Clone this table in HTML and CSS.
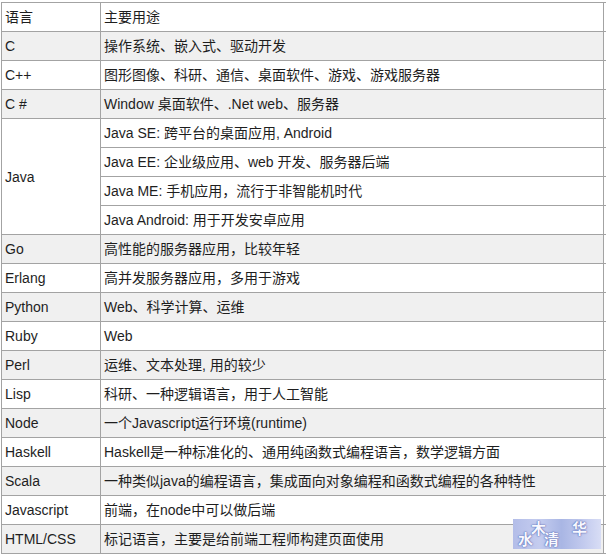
FILE: index.html
```html
<!DOCTYPE html>
<html lang="zh">
<head>
<meta charset="utf-8">
<title>语言用途</title>
<link rel="stylesheet" href="styles.css">
</head>
<body>
<div class="wrap">
<table class="langs">
  <colgroup><col class="k1"><col class="k2"><col class="k3"></colgroup>
  <tbody>
    <tr class="w"><td class="c1">语言</td><td class="c2">主要用途</td><td class="c3"></td></tr>
    <tr class="g"><td class="c1">C</td><td class="c2">操作系统、嵌入式、驱动开发</td><td class="c3"></td></tr>
    <tr class="w"><td class="c1">C++</td><td class="c2">图形图像、科研、通信、桌面软件、游戏、游戏服务器</td><td class="c3"></td></tr>
    <tr class="g"><td class="c1">C #</td><td class="c2">Window 桌面软件、.Net web、服务器</td><td class="c3"></td></tr>
    <tr class="w"><td class="c1" rowspan="4">Java</td><td class="c2">Java SE: 跨平台的桌面应用, Android</td><td class="c3"></td></tr>
    <tr class="w"><td class="c2">Java EE: 企业级应用、web 开发、服务器后端</td><td class="c3"></td></tr>
    <tr class="w"><td class="c2">Java ME: 手机应用，流行于非智能机时代</td><td class="c3"></td></tr>
    <tr class="w"><td class="c2">Java Android: 用于开发安卓应用</td><td class="c3"></td></tr>
    <tr class="g"><td class="c1">Go</td><td class="c2">高性能的服务器应用，比较年轻</td><td class="c3"></td></tr>
    <tr class="w"><td class="c1">Erlang</td><td class="c2">高并发服务器应用，多用于游戏</td><td class="c3"></td></tr>
    <tr class="g"><td class="c1">Python</td><td class="c2">Web、科学计算、运维</td><td class="c3"></td></tr>
    <tr class="w"><td class="c1">Ruby</td><td class="c2">Web</td><td class="c3"></td></tr>
    <tr class="g"><td class="c1">Perl</td><td class="c2">运维、文本处理, 用的较少</td><td class="c3"></td></tr>
    <tr class="w"><td class="c1">Lisp</td><td class="c2">科研、一种逻辑语言，用于人工智能</td><td class="c3"></td></tr>
    <tr class="g"><td class="c1">Node</td><td class="c2">一个Javascript运行环境(runtime)</td><td class="c3"></td></tr>
    <tr class="w"><td class="c1">Haskell</td><td class="c2">Haskell是一种标准化的、通用纯函数式编程语言，数学逻辑方面</td><td class="c3"></td></tr>
    <tr class="g"><td class="c1">Scala</td><td class="c2">一种类似java的编程语言，集成面向对象编程和函数式编程的各种特性</td><td class="c3"></td></tr>
    <tr class="w"><td class="c1">Javascript</td><td class="c2">前端，在node中可以做后端</td><td class="c3"></td></tr>
    <tr class="g"><td class="c1">HTML/CSS</td><td class="c2">标记语言，主要是给前端工程师构建页面使用</td><td class="c3"></td></tr>
  </tbody>
</table>
<div class="mark"><span class="m1">水</span><span class="m2">木</span><span class="m3">清</span><span class="m4">华</span></div>
</div>
</body>
</html>
```

FILE: styles.css
```css
html, body {
  margin: 0;
  padding: 0;
  background: #ffffff;
  overflow: hidden;
}
.wrap {
  position: relative;
  box-sizing: border-box;
  padding: 2px 0 0 1px;
  width: 606px;
  height: 555px;
  overflow: hidden;
}
.langs {
  border-collapse: separate;
  border-spacing: 0;
  table-layout: fixed;
  width: 613px;
  border-top: 1px solid #a3a3a3;
  border-left: 1px solid #a3a3a3;
  font-family: "Liberation Sans", Arial, "Noto Sans CJK SC", sans-serif;
  font-size: 14px;
  color: #1e1e1e;
}
.k1 { width: 99px; }
.k2 { width: 503px; }
.k3 { width: 10px; }
.langs td {
  box-sizing: border-box;
  height: 29px;
  padding: 0 3px;
  border-bottom: 1px solid #a3a3a3;
  white-space: nowrap;
  vertical-align: middle;
  line-height: 16px;
}
.langs td.c1 {
  border-right: 1px solid #a3a3a3;
}
.langs td.c2 {
  border-right: 1px solid #a3a3a3;
}
.langs td.c3 {
  padding: 0;
  background: #ffffff;
}
.langs tr.g td.c1,
.langs tr.g td.c2 {
  background: #f0f0f0;
}
.mark {
  position: absolute;
  left: 513px;
  top: 519px;
  width: 88px;
  height: 30px;
  background: linear-gradient(90deg, #b3bde8 0%, #c4ccef 30%, #a9b6e4 55%, #c2caee 80%, #d8ddf5 100%);
  font-family: "Noto Sans CJK SC", sans-serif;
  font-weight: 700;
  color: #f7f8ff;
  text-shadow: 0 0 1px #4a5aa8, 0 0 2px #5b6bb5;
  font-size: 15px;
  line-height: 15px;
}
.mark span {
  position: absolute;
}
.m1 { left: 5px; top: 12px; }
.m2 { left: 18px; top: 1px; }
.m3 { left: 31px; top: 12px; }
.m4 { left: 59px; top: 1px; }
```
